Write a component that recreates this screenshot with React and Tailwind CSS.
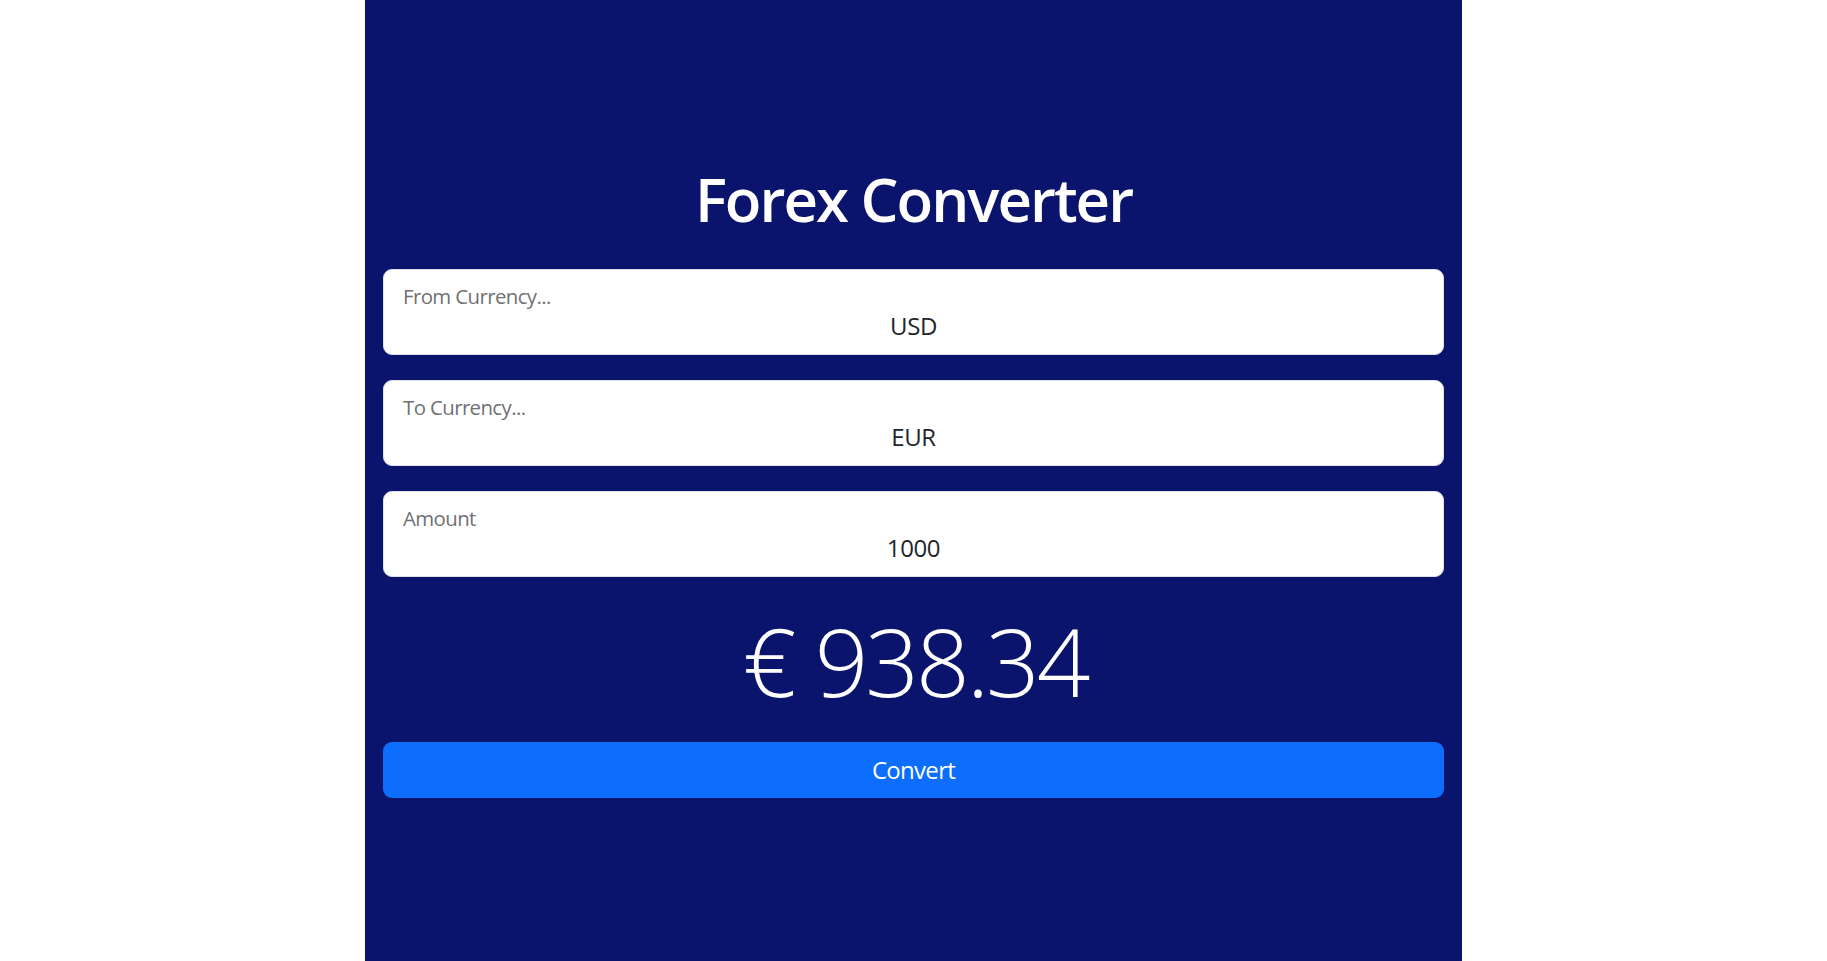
import { useState } from "react";

const Field = ({ label, value }) => (
  <div className="flex h-[86px] flex-col rounded-[9px] border border-[#dee2e6] bg-white px-[19px] pt-[14px]">
    <span className="text-[20.4px] leading-[24px] tracking-[-0.6px] text-[#6f7174]">{label}</span>
    <input
      readOnly
      value={value}
      className="mt-[4px] h-[28px] w-full bg-transparent text-center text-[24px] leading-[28px] tracking-[-0.4px] text-[#212529] outline-none"
    />
  </div>
);

export default function App() {
  const [from] = useState("USD");
  const [to] = useState("EUR");
  const [amount] = useState("1000");

  return (
    <div className="min-h-screen bg-white font-['Open_Sans',sans-serif]">
      <div className="mx-auto flex min-h-screen w-[1097px] flex-col bg-[#0b146c] px-[18px] pt-[163px]">
        <h1 className="mb-[34px] text-center text-[60px] font-semibold leading-[72px] tracking-[-2px] text-white">
          Forex Converter
        </h1>

        <div className="flex flex-col gap-[25px]">
          <Field label="From Currency..." value={from} />
          <Field label="To Currency..." value={to} />
          <Field label="Amount" value={amount} />
        </div>

        <div className="mt-[27px] pl-[3px] text-center text-[94px] font-light leading-[115px] tracking-[-3px] text-white">
          € 938.34
        </div>

        <button className="mt-[23px] h-[56px] w-full rounded-[9px] bg-[#0d6efd] text-[24px] tracking-[-0.7px] text-white">
          Convert
        </button>
      </div>
    </div>
  );
}
